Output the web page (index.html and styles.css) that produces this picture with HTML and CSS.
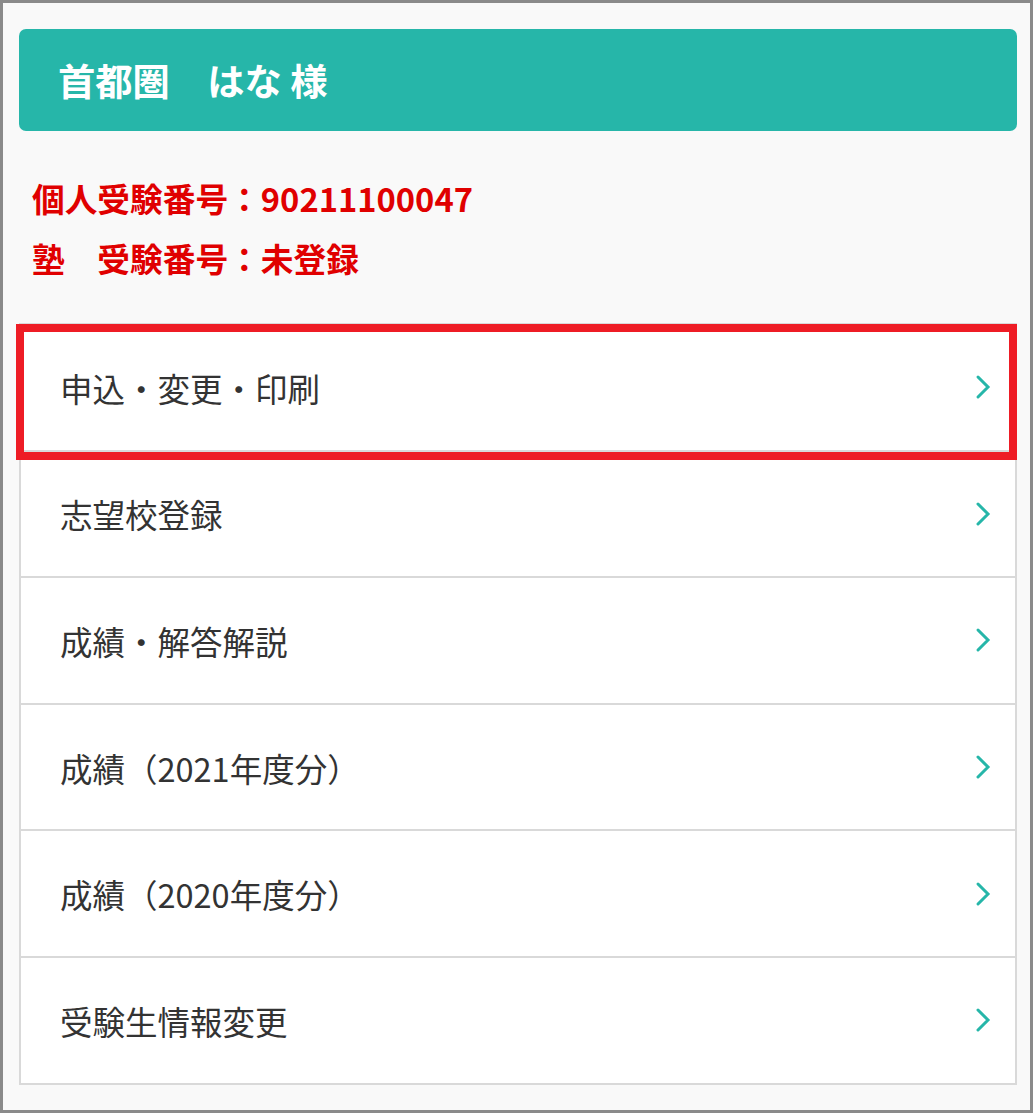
FILE: index.html
```html
<!DOCTYPE html>
<html lang="ja">
<head>
<meta charset="utf-8">
<title>マイページ</title>
<link rel="stylesheet" href="styles.css">
</head>
<body>
<div class="frame">
  <div class="header">首都圏　はな 様</div>
  <div class="ids">
    <div class="id-line">個人受験番号：90211100047</div>
    <div class="id-line">塾　受験番号：未登録</div>
  </div>
  <div class="menu">
    <div class="item"><span>申込・変更・印刷</span><svg class="chev" width="16" height="26" viewBox="0 0 16 26"><polyline points="3,3 13,13 3,23" fill="none" stroke="#26b6a9" stroke-width="3" stroke-linecap="round" stroke-linejoin="miter"/></svg></div>
    <div class="item"><span>志望校登録</span><svg class="chev" width="16" height="26" viewBox="0 0 16 26"><polyline points="3,3 13,13 3,23" fill="none" stroke="#26b6a9" stroke-width="3" stroke-linecap="round" stroke-linejoin="miter"/></svg></div>
    <div class="item"><span>成績・解答解説</span><svg class="chev" width="16" height="26" viewBox="0 0 16 26"><polyline points="3,3 13,13 3,23" fill="none" stroke="#26b6a9" stroke-width="3" stroke-linecap="round" stroke-linejoin="miter"/></svg></div>
    <div class="item"><span>成績（2021年度分）</span><svg class="chev" width="16" height="26" viewBox="0 0 16 26"><polyline points="3,3 13,13 3,23" fill="none" stroke="#26b6a9" stroke-width="3" stroke-linecap="round" stroke-linejoin="miter"/></svg></div>
    <div class="item"><span>成績（2020年度分）</span><svg class="chev" width="16" height="26" viewBox="0 0 16 26"><polyline points="3,3 13,13 3,23" fill="none" stroke="#26b6a9" stroke-width="3" stroke-linecap="round" stroke-linejoin="miter"/></svg></div>
    <div class="item"><span>受験生情報変更</span><svg class="chev" width="16" height="26" viewBox="0 0 16 26"><polyline points="3,3 13,13 3,23" fill="none" stroke="#26b6a9" stroke-width="3" stroke-linecap="round" stroke-linejoin="miter"/></svg></div>
    <div class="highlight"></div>
  </div>
</div>
</body>
</html>
```

FILE: styles.css
```css
html, body {
  margin: 0;
  padding: 0;
}
body {
  width: 1033px;
  height: 1113px;
  font-family: "Noto Sans CJK JP", "Noto Sans", sans-serif;
}
.frame {
  box-sizing: border-box;
  width: 1033px;
  height: 1113px;
  border: 3px solid #8a8a8a;
  background: #f9f9f9;
  padding: 26px 13px 0 16px;
}
.header {
  height: 102px;
  background: #26b6a9;
  border-radius: 7px;
  color: #fff;
  font-weight: 700;
  font-size: 37.3px;
  line-height: 102px;
  padding-left: 39px;
}
.ids {
  padding: 37px 0 35px 13px;
}
.id-line {
  color: #e00000;
  font-weight: 700;
  font-size: 32.7px;
  line-height: 60px;
}
.menu {
  position: relative;
  border-top: 2px solid #d9d9d9;
}
.item {
  display: flex;
  align-items: center;
  justify-content: space-between;
  height: 124.6px;
  background: #fff;
  border: 2px solid #d9d9d9;
  border-top: none;
  padding: 0 24px 0 39px;
  color: #333;
  font-size: 32.5px;
}
.chev {
  display: block;
}
.highlight {
  position: absolute;
  left: -3px;
  top: -1px;
  width: 1001px;
  height: 136px;
  box-sizing: border-box;
  border: 8px solid #ee1c25;
}
```
